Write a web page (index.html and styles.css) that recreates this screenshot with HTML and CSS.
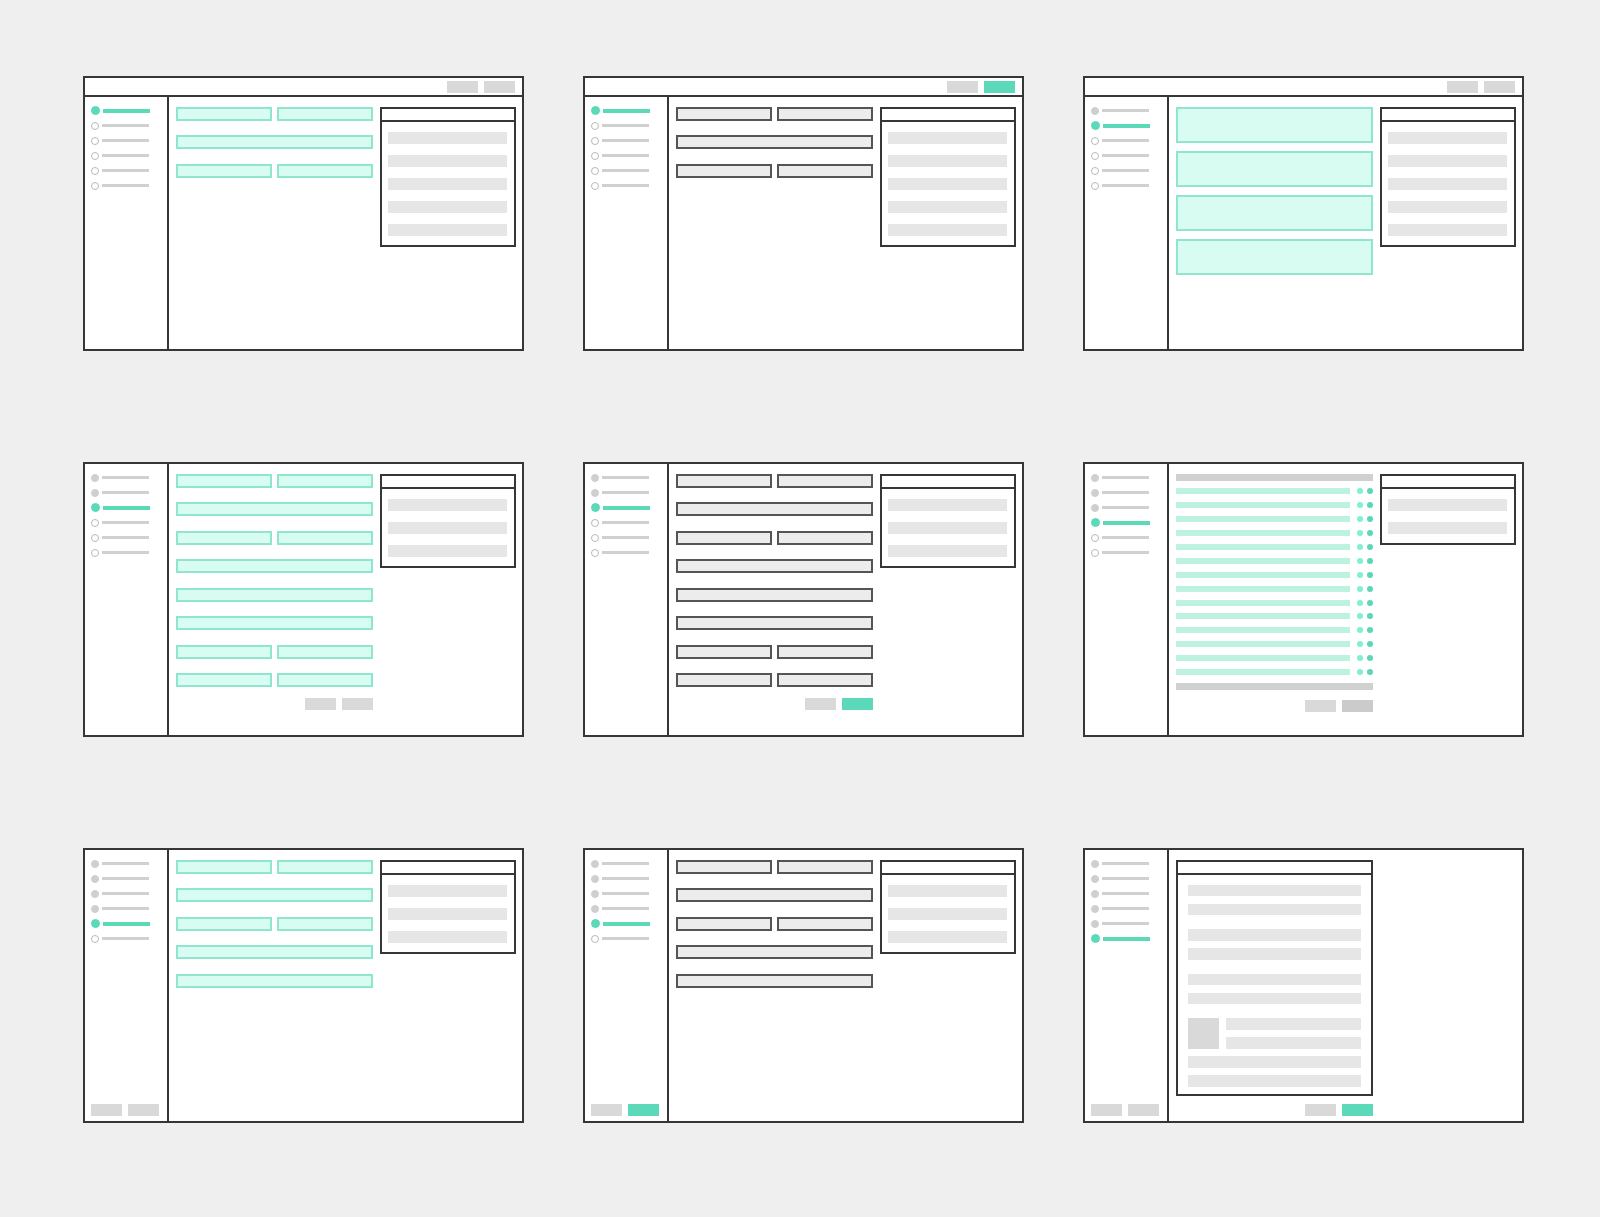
FILE: index.html
```html
<!DOCTYPE html>
<html lang="en">

<head>
    <meta charset="UTF-8">
    <meta name="viewport" content="width=device-width, initial-scale=1.0">
    <title>Flow</title>
    <link rel="stylesheet" href="styles.css">
</head>

<body>
    <div class="board">

        <!-- 1: step one, empty form -->
        <div class="screen">
            <div class="topbar"><span class="btn"></span><span class="btn"></span></div>
            <div class="main">
                <div class="side">
                    <ul class="steps">
                        <li class="step active"><i class="dot"></i><i class="line"></i></li>
                        <li class="step"><i class="dot"></i><i class="line"></i></li>
                        <li class="step"><i class="dot"></i><i class="line"></i></li>
                        <li class="step"><i class="dot"></i><i class="line"></i></li>
                        <li class="step"><i class="dot"></i><i class="line"></i></li>
                        <li class="step"><i class="dot"></i><i class="line"></i></li>
                    </ul>
                </div>
                <div class="content">
                    <div class="form">
                        <div class="fields">
                            <div class="pair"><div class="field"></div><div class="field"></div></div>
                            <div class="field"></div>
                            <div class="pair"><div class="field"></div><div class="field"></div></div>
                        </div>
                    </div>
                    <div class="panel">
                        <div class="panel-head"></div>
                        <div class="panel-body">
                            <div class="bar"></div><div class="bar"></div><div class="bar"></div><div class="bar"></div><div class="bar"></div>
                        </div>
                    </div>
                </div>
            </div>
        </div>

        <!-- 2: step one, filled -->
        <div class="screen">
            <div class="topbar"><span class="btn"></span><span class="btn teal"></span></div>
            <div class="main">
                <div class="side">
                    <ul class="steps">
                        <li class="step active"><i class="dot"></i><i class="line"></i></li>
                        <li class="step"><i class="dot"></i><i class="line"></i></li>
                        <li class="step"><i class="dot"></i><i class="line"></i></li>
                        <li class="step"><i class="dot"></i><i class="line"></i></li>
                        <li class="step"><i class="dot"></i><i class="line"></i></li>
                        <li class="step"><i class="dot"></i><i class="line"></i></li>
                    </ul>
                </div>
                <div class="content">
                    <div class="form">
                        <div class="fields">
                            <div class="pair"><div class="field grey"></div><div class="field grey"></div></div>
                            <div class="field grey"></div>
                            <div class="pair"><div class="field grey"></div><div class="field grey"></div></div>
                        </div>
                    </div>
                    <div class="panel">
                        <div class="panel-head"></div>
                        <div class="panel-body">
                            <div class="bar"></div><div class="bar"></div><div class="bar"></div><div class="bar"></div><div class="bar"></div>
                        </div>
                    </div>
                </div>
            </div>
        </div>

        <!-- 3: step two, pick a card -->
        <div class="screen">
            <div class="topbar"><span class="btn"></span><span class="btn"></span></div>
            <div class="main">
                <div class="side">
                    <ul class="steps">
                        <li class="step done"><i class="dot"></i><i class="line"></i></li>
                        <li class="step active"><i class="dot"></i><i class="line"></i></li>
                        <li class="step"><i class="dot"></i><i class="line"></i></li>
                        <li class="step"><i class="dot"></i><i class="line"></i></li>
                        <li class="step"><i class="dot"></i><i class="line"></i></li>
                        <li class="step"><i class="dot"></i><i class="line"></i></li>
                    </ul>
                </div>
                <div class="content">
                    <div class="cards">
                        <div class="card"></div>
                        <div class="card"></div>
                        <div class="card"></div>
                        <div class="card"></div>
                    </div>
                    <div class="panel">
                        <div class="panel-head"></div>
                        <div class="panel-body">
                            <div class="bar"></div><div class="bar"></div><div class="bar"></div><div class="bar"></div><div class="bar"></div>
                        </div>
                    </div>
                </div>
            </div>
        </div>

        <!-- 4: step three, long form -->
        <div class="screen">
            <div class="main">
                <div class="side">
                    <ul class="steps">
                        <li class="step done"><i class="dot"></i><i class="line"></i></li>
                        <li class="step done"><i class="dot"></i><i class="line"></i></li>
                        <li class="step active"><i class="dot"></i><i class="line"></i></li>
                        <li class="step"><i class="dot"></i><i class="line"></i></li>
                        <li class="step"><i class="dot"></i><i class="line"></i></li>
                        <li class="step"><i class="dot"></i><i class="line"></i></li>
                    </ul>
                </div>
                <div class="content">
                    <div class="form">
                        <div class="fields">
                            <div class="pair"><div class="field"></div><div class="field"></div></div>
                            <div class="field"></div>
                            <div class="pair"><div class="field"></div><div class="field"></div></div>
                            <div class="field"></div>
                            <div class="field"></div>
                            <div class="field"></div>
                            <div class="pair"><div class="field"></div><div class="field"></div></div>
                            <div class="pair"><div class="field"></div><div class="field"></div></div>
                        </div>
                        <div class="actions"><span class="btn"></span><span class="btn"></span></div>
                    </div>
                    <div class="panel">
                        <div class="panel-head"></div>
                        <div class="panel-body">
                            <div class="bar"></div><div class="bar"></div><div class="bar"></div>
                        </div>
                    </div>
                </div>
            </div>
        </div>

        <!-- 5: step three, filled -->
        <div class="screen">
            <div class="main">
                <div class="side">
                    <ul class="steps">
                        <li class="step done"><i class="dot"></i><i class="line"></i></li>
                        <li class="step done"><i class="dot"></i><i class="line"></i></li>
                        <li class="step active"><i class="dot"></i><i class="line"></i></li>
                        <li class="step"><i class="dot"></i><i class="line"></i></li>
                        <li class="step"><i class="dot"></i><i class="line"></i></li>
                        <li class="step"><i class="dot"></i><i class="line"></i></li>
                    </ul>
                </div>
                <div class="content">
                    <div class="form">
                        <div class="fields">
                            <div class="pair"><div class="field grey"></div><div class="field grey"></div></div>
                            <div class="field grey"></div>
                            <div class="pair"><div class="field grey"></div><div class="field grey"></div></div>
                            <div class="field grey"></div>
                            <div class="field grey"></div>
                            <div class="field grey"></div>
                            <div class="pair"><div class="field grey"></div><div class="field grey"></div></div>
                            <div class="pair"><div class="field grey"></div><div class="field grey"></div></div>
                        </div>
                        <div class="actions"><span class="btn"></span><span class="btn teal"></span></div>
                    </div>
                    <div class="panel">
                        <div class="panel-head"></div>
                        <div class="panel-body">
                            <div class="bar"></div><div class="bar"></div><div class="bar"></div>
                        </div>
                    </div>
                </div>
            </div>
        </div>

        <!-- 6: step four, checklist -->
        <div class="screen">
            <div class="main">
                <div class="side">
                    <ul class="steps">
                        <li class="step done"><i class="dot"></i><i class="line"></i></li>
                        <li class="step done"><i class="dot"></i><i class="line"></i></li>
                        <li class="step done"><i class="dot"></i><i class="line"></i></li>
                        <li class="step active"><i class="dot"></i><i class="line"></i></li>
                        <li class="step"><i class="dot"></i><i class="line"></i></li>
                        <li class="step"><i class="dot"></i><i class="line"></i></li>
                    </ul>
                </div>
                <div class="content">
                    <div class="form">
                        <div class="list">
                            <div class="list-head"></div>
                            <div class="list-row"><i class="row-bar"></i><i class="pip"></i><i class="pip deep"></i></div>
                            <div class="list-row"><i class="row-bar"></i><i class="pip"></i><i class="pip deep"></i></div>
                            <div class="list-row"><i class="row-bar"></i><i class="pip"></i><i class="pip deep"></i></div>
                            <div class="list-row"><i class="row-bar"></i><i class="pip"></i><i class="pip deep"></i></div>
                            <div class="list-row"><i class="row-bar"></i><i class="pip"></i><i class="pip deep"></i></div>
                            <div class="list-row"><i class="row-bar"></i><i class="pip"></i><i class="pip deep"></i></div>
                            <div class="list-row"><i class="row-bar"></i><i class="pip"></i><i class="pip deep"></i></div>
                            <div class="list-row"><i class="row-bar"></i><i class="pip"></i><i class="pip deep"></i></div>
                            <div class="list-row"><i class="row-bar"></i><i class="pip"></i><i class="pip deep"></i></div>
                            <div class="list-row"><i class="row-bar"></i><i class="pip"></i><i class="pip deep"></i></div>
                            <div class="list-row"><i class="row-bar"></i><i class="pip"></i><i class="pip deep"></i></div>
                            <div class="list-row"><i class="row-bar"></i><i class="pip"></i><i class="pip deep"></i></div>
                            <div class="list-row"><i class="row-bar"></i><i class="pip"></i><i class="pip deep"></i></div>
                            <div class="list-row"><i class="row-bar"></i><i class="pip"></i><i class="pip deep"></i></div>
                            <div class="list-head"></div>
                        </div>
                        <div class="actions"><span class="btn"></span><span class="btn dark"></span></div>
                    </div>
                    <div class="panel">
                        <div class="panel-head"></div>
                        <div class="panel-body">
                            <div class="bar"></div><div class="bar"></div>
                        </div>
                    </div>
                </div>
            </div>
        </div>

        <!-- 7: step five, short form -->
        <div class="screen">
            <div class="main">
                <div class="side">
                    <ul class="steps">
                        <li class="step done"><i class="dot"></i><i class="line"></i></li>
                        <li class="step done"><i class="dot"></i><i class="line"></i></li>
                        <li class="step done"><i class="dot"></i><i class="line"></i></li>
                        <li class="step done"><i class="dot"></i><i class="line"></i></li>
                        <li class="step active"><i class="dot"></i><i class="line"></i></li>
                        <li class="step"><i class="dot"></i><i class="line"></i></li>
                    </ul>
                    <div class="side-actions"><span class="btn"></span><span class="btn"></span></div>
                </div>
                <div class="content">
                    <div class="form">
                        <div class="fields">
                            <div class="pair"><div class="field"></div><div class="field"></div></div>
                            <div class="field"></div>
                            <div class="pair"><div class="field"></div><div class="field"></div></div>
                            <div class="field"></div>
                            <div class="field"></div>
                        </div>
                    </div>
                    <div class="panel">
                        <div class="panel-head"></div>
                        <div class="panel-body">
                            <div class="bar"></div><div class="bar"></div><div class="bar"></div>
                        </div>
                    </div>
                </div>
            </div>
        </div>

        <!-- 8: step five, filled -->
        <div class="screen">
            <div class="main">
                <div class="side">
                    <ul class="steps">
                        <li class="step done"><i class="dot"></i><i class="line"></i></li>
                        <li class="step done"><i class="dot"></i><i class="line"></i></li>
                        <li class="step done"><i class="dot"></i><i class="line"></i></li>
                        <li class="step done"><i class="dot"></i><i class="line"></i></li>
                        <li class="step active"><i class="dot"></i><i class="line"></i></li>
                        <li class="step"><i class="dot"></i><i class="line"></i></li>
                    </ul>
                    <div class="side-actions"><span class="btn"></span><span class="btn teal"></span></div>
                </div>
                <div class="content">
                    <div class="form">
                        <div class="fields">
                            <div class="pair"><div class="field grey"></div><div class="field grey"></div></div>
                            <div class="field grey"></div>
                            <div class="pair"><div class="field grey"></div><div class="field grey"></div></div>
                            <div class="field grey"></div>
                            <div class="field grey"></div>
                        </div>
                    </div>
                    <div class="panel">
                        <div class="panel-head"></div>
                        <div class="panel-body">
                            <div class="bar"></div><div class="bar"></div><div class="bar"></div>
                        </div>
                    </div>
                </div>
            </div>
        </div>

        <!-- 9: step six, summary -->
        <div class="screen">
            <div class="main">
                <div class="side">
                    <ul class="steps">
                        <li class="step done"><i class="dot"></i><i class="line"></i></li>
                        <li class="step done"><i class="dot"></i><i class="line"></i></li>
                        <li class="step done"><i class="dot"></i><i class="line"></i></li>
                        <li class="step done"><i class="dot"></i><i class="line"></i></li>
                        <li class="step done"><i class="dot"></i><i class="line"></i></li>
                        <li class="step active"><i class="dot"></i><i class="line"></i></li>
                    </ul>
                    <div class="side-actions"><span class="btn"></span><span class="btn"></span></div>
                </div>
                <div class="content doc">
                    <div class="panel">
                        <div class="panel-head"></div>
                        <div class="doc-body">
                            <div class="bar"></div>
                            <div class="bar"></div>
                            <div class="bar sp"></div>
                            <div class="bar"></div>
                            <div class="bar sp"></div>
                            <div class="bar"></div>
                            <div class="media sp">
                                <div class="media-img"></div>
                                <div class="media-lines"><div class="bar"></div><div class="bar"></div></div>
                            </div>
                            <div class="bar"></div>
                            <div class="bar"></div>
                        </div>
                    </div>
                    <div class="actions"><span class="btn"></span><span class="btn teal"></span></div>
                </div>
            </div>
        </div>

    </div>
</body>

</html>
```

FILE: styles.css
```css
* {
    margin: 0;
    padding: 0;
    box-sizing: border-box;
}

body {
    background-color: #efefef;
    font-family: "Liberation Sans", Arial, sans-serif;
}

.board {
    display: grid;
    grid-template-columns: repeat(3, 441px);
    gap: 111px 59px;
    padding: 76px 0 0 83px;
}

.screen {
    display: flex;
    flex-direction: column;
    height: 275px;
    overflow: hidden;
    border: 2px solid #363636;
    background: #fff;
}

.topbar {
    display: flex;
    justify-content: flex-end;
    align-items: center;
    gap: 6px;
    height: 19px;
    padding-right: 7px;
    border-bottom: 2px solid #363636;
}

.btn {
    display: block;
    width: 31px;
    height: 12px;
    background: #d9d9d9;
}

.btn.teal {
    background: #5cd9b9;
}

.btn.dark {
    background: #cbcbcb;
}

.main {
    display: flex;
    flex: 1;
    min-height: 0;
}

/* left column with the step list */
.side {
    display: flex;
    flex-direction: column;
    width: 84px;
    padding: 6px 0 5.5px 6px;
    border-right: 2px solid #363636;
}

.steps {
    list-style: none;
}

.step {
    display: flex;
    align-items: center;
    gap: 3px;
    height: 15px;
}

.step i {
    display: block;
}

.dot {
    width: 8px;
    height: 8px;
    border-radius: 50%;
    border: 1px solid #b9b9b9;
    background: #fff;
}

.step.done .dot {
    border-color: #cfcfcf;
    background: #cfcfcf;
}

.step.active .dot {
    width: 9px;
    height: 9px;
    border-color: #5cd9b9;
    background: #5cd9b9;
}

.line {
    width: 47px;
    height: 3.5px;
    background: #d0d0d0;
}

.step.active .line {
    height: 4px;
    background: #5cd9b9;
}

.side-actions {
    display: flex;
    gap: 6px;
    margin-top: auto;
}

/* right part: form column + info panel */
.content {
    flex: 1;
    display: grid;
    grid-template-columns: 197px 136px;
    column-gap: 7px;
    align-items: start;
    align-content: start;
    padding: 9.5px 6px 0 7px;
}

.fields {
    display: flex;
    flex-direction: column;
    gap: 14.5px;
}

.pair {
    display: grid;
    grid-template-columns: 1fr 1fr;
    gap: 5px;
}

.field {
    height: 14px;
    border: 2px solid #8fe6cf;
    background: #d9fcf2;
}

.field.grey {
    border-color: #555;
    background: #ececec;
}

.actions {
    display: flex;
    justify-content: flex-end;
    gap: 6px;
    margin-top: 10.5px;
}

.panel {
    border: 2px solid #363636;
}

.panel-head {
    height: 13px;
    border-bottom: 2px solid #363636;
}

.panel-body {
    display: flex;
    flex-direction: column;
    gap: 11px;
    padding: 10px 7px 9px 6px;
}

.bar {
    height: 12px;
    background: #e6e6e6;
}

.cards {
    display: flex;
    flex-direction: column;
    gap: 7.5px;
}

.card {
    height: 36.5px;
    border: 2px solid #8fe6cf;
    background: #d9fcf2;
}

/* checklist rows */
.list {
    display: flex;
    flex-direction: column;
    gap: 7.9px;
}

.list-head {
    height: 7px;
    background: #d0d0d0;
}

.list-row {
    display: flex;
    align-items: center;
    gap: 4.5px;
    height: 6px;
}

.list-row i {
    display: block;
}

.row-bar {
    flex: 1;
    height: 6px;
    margin-right: 2px;
    background: #bdf2e1;
}

.pip {
    width: 6px;
    height: 6px;
    border-radius: 50%;
    background: #80efd4;
}

.pip.deep {
    background: #5cd6b6;
}

/* summary page */
.content.doc {
    display: flex;
    flex-direction: column;
    align-items: flex-start;
    padding-bottom: 5.5px;
}

.doc .panel {
    flex: 1;
    width: 197px;
}

.doc .actions {
    width: 197px;
    margin-top: 7.5px;
}

.doc-body {
    display: flex;
    flex-direction: column;
    gap: 7.5px;
    padding: 10px 10px 6px;
}

.doc-body .bar {
    height: 11.5px;
}

.doc-body .sp {
    margin-top: 6.5px;
}

.media {
    display: flex;
    gap: 7px;
}

.media-img {
    width: 30.5px;
    height: 30.5px;
    background: #d9d9d9;
}

.media-lines {
    flex: 1;
    display: flex;
    flex-direction: column;
    gap: 7.5px;
}
```
